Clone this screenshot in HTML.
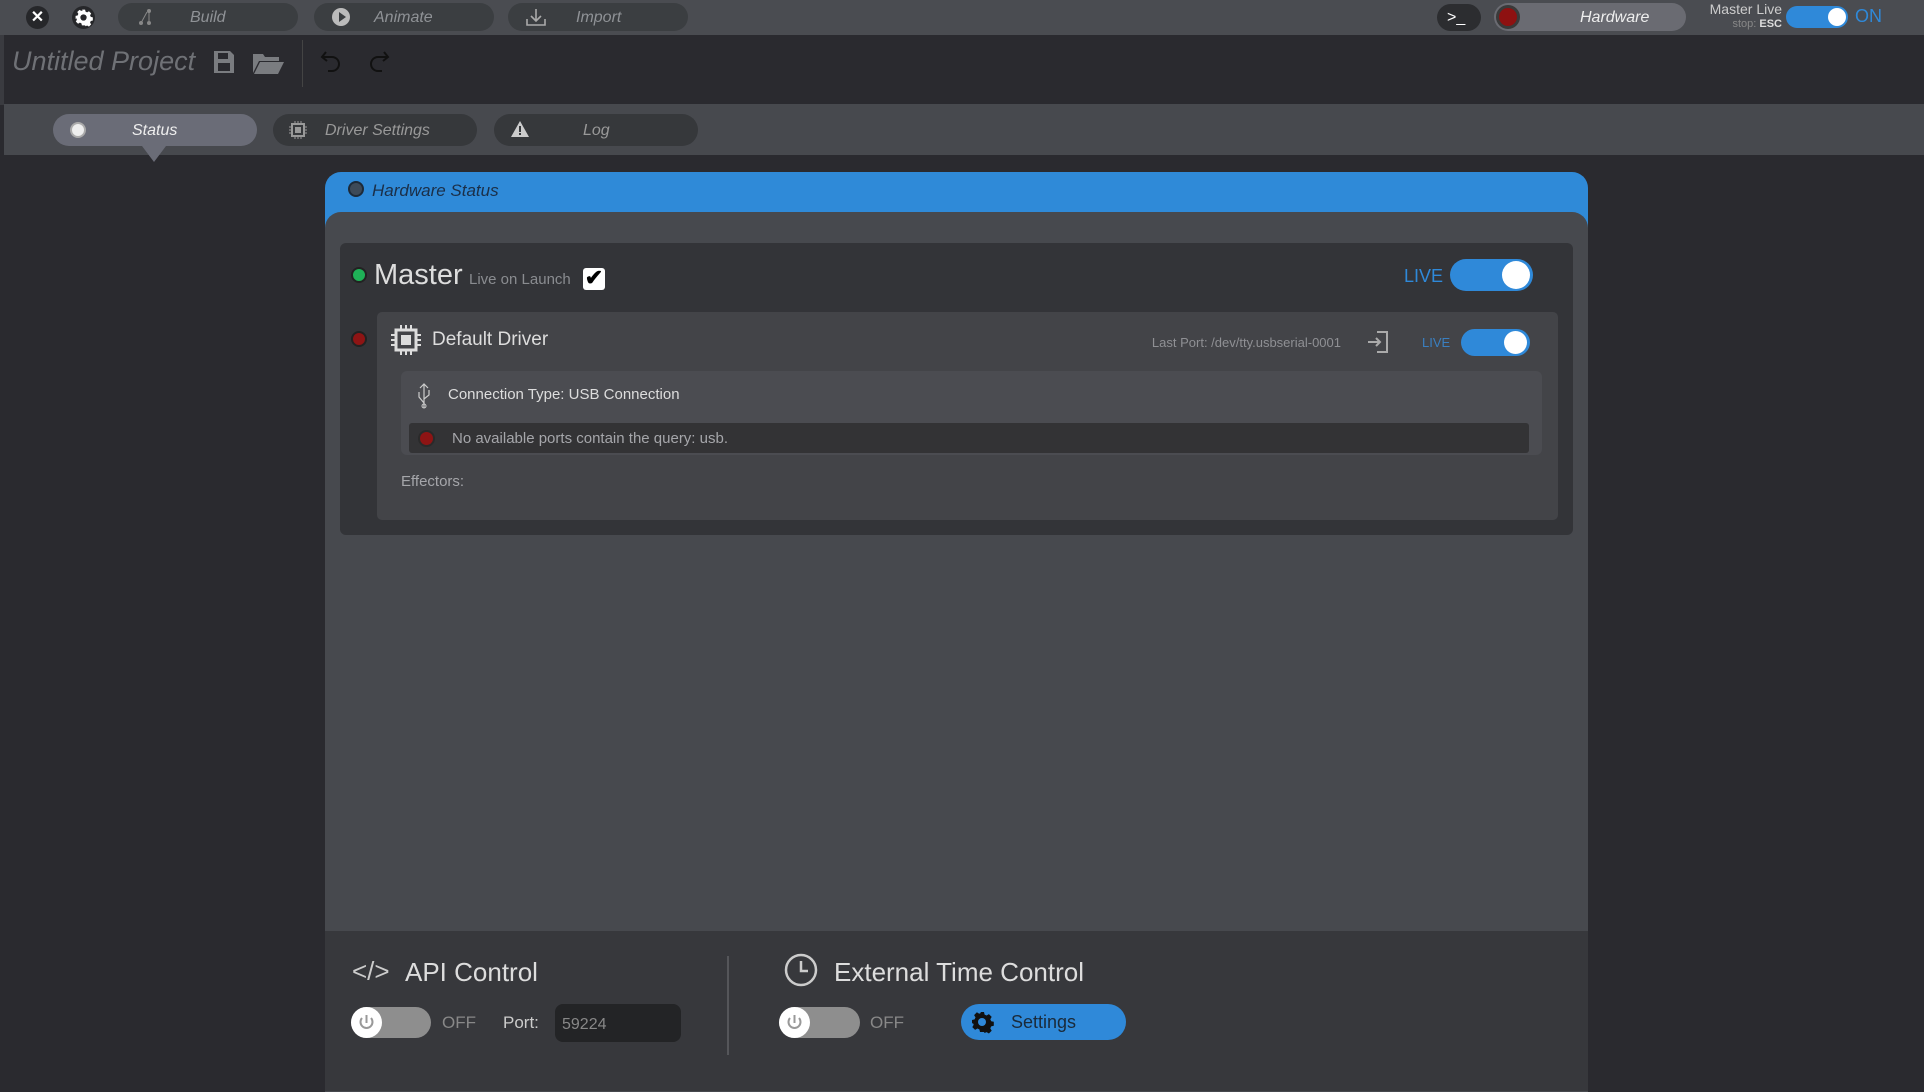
<!DOCTYPE html>
<html><head><meta charset="utf-8"><style>
*{box-sizing:border-box;margin:0;padding:0}
body{width:1924px;height:1076px;background:#2a2a2f;font-family:"Liberation Sans",sans-serif;position:relative;overflow:hidden;color:#ddd}
.a{position:absolute;white-space:nowrap}
.pill{position:absolute;border-radius:16px;background:#3b3e41;color:#8f9296;font-style:italic;font-size:16px}
.tg{position:absolute;border-radius:20px;background:#2f89d9}
.tg i{position:absolute;background:#fff;border-radius:50%}
</style></head><body>
<!-- top bar -->
<div class="a" style="left:0;top:0;width:1924px;height:35px;background:#4a4c51"></div>
<div class="a" style="left:0;top:35px;width:4px;height:70px;background:#3a3b40"></div>
<div class="a" style="left:26px;top:6px;width:23px;height:23px;border-radius:50%;background:#26272a;color:#fff;font-size:16px;font-weight:bold;text-align:center;line-height:23px">✕</div>
<div class="a" style="left:72px;top:6px;width:23px;height:23px;border-radius:50%;background:#26272a"></div>
<svg class="a" style="left:74px;top:8px" width="19" height="19" viewBox="0 0 24 24"><path fill="#fff" d="M10 2h4l.6 2.6 2 .9 2.3-1.4 2.8 2.8-1.4 2.3.9 2 2.6.6v4l-2.6.6-.9 2 1.4 2.3-2.8 2.8-2.3-1.4-2 .9L14 22h-4l-.6-2.6-2-.9-2.3 1.4-2.8-2.8 1.4-2.3-.9-2L2 14v-4l2.6-.6.9-2-1.4-2.3 2.8-2.8 2.3 1.4 2-.9z"/><circle cx="12" cy="12" r="4" fill="#26272a"/></svg>
<div class="pill" style="left:118px;top:3px;width:180px;height:28px"><span class="a" style="left:72px;top:6px">Build</span>
<svg class="a" style="left:20px;top:5px" width="16" height="18"><circle cx="3" cy="15" r="2" fill="#888"/><circle cx="11" cy="15" r="2" fill="#888"/><circle cx="11" cy="3" r="2" fill="#888"/><path d="M3 15 L9 4 M11 3 V13" stroke="#888" fill="none"/></svg></div>
<div class="pill" style="left:314px;top:3px;width:180px;height:28px"><span class="a" style="left:60px;top:6px">Animate</span>
<div class="a" style="left:18px;top:5px;width:18px;height:18px;border-radius:50%;background:#bbb"></div><div class="a" style="left:25px;top:9px;border-left:7px solid #3b3e41;border-top:5px solid transparent;border-bottom:5px solid transparent"></div></div>
<div class="pill" style="left:508px;top:3px;width:180px;height:28px"><span class="a" style="left:68px;top:6px">Import</span>
<svg class="a" style="left:17px;top:4px" width="22" height="20"><path d="M2 12v6h18v-6M11 2v12M6 9l5 5 5-5" stroke="#aaa" stroke-width="1.6" fill="none"/></svg></div>
<div class="a" style="left:1437px;top:4px;width:44px;height:27px;border-radius:14px;background:#2c2d30;color:#fff;font-size:16px;line-height:27px;padding-left:10px">&gt;_</div>
<div class="a" style="left:1494px;top:3px;width:192px;height:28px;border-radius:14px;background:#6a6b72;color:#eee;font-style:italic;font-size:16px;line-height:30px;padding-left:86px">Hardware</div>
<div class="a" style="left:1496px;top:5px;width:24px;height:24px;border-radius:50%;background:#333;border:3px solid #3a3a3a"><div style="width:18px;height:18px;border-radius:50%;background:#8e1111"></div></div>
<div class="a" style="left:1700px;top:1px;color:#ccc;font-size:14px;width:82px;text-align:right">Master Live</div>
<div class="a" style="left:1700px;top:18px;color:#888;font-size:11px;width:82px;text-align:right">stop: <b style="color:#ddd">ESC</b></div>
<div class="tg" style="left:1786px;top:6px;width:62px;height:22px"><i style="left:42px;top:2px;width:18px;height:18px"></i></div>
<div class="a" style="left:1855px;top:6px;color:#2f89d9;font-size:18px">ON</div>
<!-- title bar -->
<div class="a" style="left:12px;top:46px;font-size:27px;font-style:italic;color:#6f7176;font-weight:300">Untitled Project</div>
<svg class="a" style="left:213px;top:50px" width="22" height="24"><path d="M1 1h16l4 4v18H1z" fill="#7a7c80"/><rect x="5" y="3" width="10" height="6" fill="#2a2a2f"/><rect x="5" y="13" width="12" height="8" fill="#2a2a2f"/></svg>
<svg class="a" style="left:252px;top:52px" width="32" height="22"><path d="M1 2h10l2 3h14v4H7L1 21z" fill="#7a7c80"/><path d="M8 10h24l-6 12H2z" fill="#7a7c80"/></svg>
<div class="a" style="left:302px;top:40px;width:1px;height:47px;background:#444"></div>
<svg class="a" style="left:320px;top:48px" width="90" height="30"><path d="M6 4L2 9l5 4M2 9h10a7 7 0 0 1 0 14H8" stroke="#111" stroke-width="2" fill="none"/><path d="M64 4l4 5-5 4M68 9H58a7 7 0 0 0 0 14h4" stroke="#111" stroke-width="2" fill="none"/></svg>
<!-- tab bar -->
<div class="a" style="left:4px;top:104px;width:1920px;height:51px;background:#47494e"></div>
<div class="a" style="left:53px;top:114px;width:204px;height:32px;border-radius:16px;background:#6a6c77;color:#eee;font-style:italic;font-size:16px;line-height:34px;padding-left:79px">Status</div>
<div class="a" style="left:70px;top:122px;width:16px;height:16px;border-radius:50%;background:#eee;border:2px solid #aaa"></div>
<div class="a" style="left:142px;top:146px;border-top:16px solid #6a6c77;border-left:12px solid transparent;border-right:12px solid transparent"></div>
<div class="a" style="left:273px;top:114px;width:204px;height:32px;border-radius:16px;background:#36383b;color:#999;font-style:italic;font-size:16px;line-height:34px;padding-left:52px">Driver Settings</div>
<svg class="a" style="left:289px;top:121px" width="18" height="18"><rect x="3" y="3" width="12" height="12" fill="none" stroke="#999" stroke-width="2"/><rect x="6" y="6" width="6" height="6" fill="#999"/><path d="M6 0v3M9 0v3M12 0v3M6 15v3M9 15v3M12 15v3M0 6h3M0 9h3M0 12h3M15 6h3M15 9h3M15 12h3" stroke="#999"/></svg>
<div class="a" style="left:494px;top:114px;width:204px;height:32px;border-radius:16px;background:#36383b;color:#999;font-style:italic;font-size:16px;line-height:34px;padding-left:89px">Log</div>
<svg class="a" style="left:510px;top:120px" width="20" height="18"><path d="M10 1L19 17H1z" fill="#ccc"/><rect x="9" y="6" width="2" height="6" fill="#36383b"/><rect x="9" y="13" width="2" height="2" fill="#36383b"/></svg>
<!-- panel -->
<div class="a" style="left:325px;top:172px;width:1263px;height:920px;border-radius:16px;background:#2f8ad8"></div>
<div class="a" style="left:348px;top:181px;width:16px;height:16px;border-radius:50%;background:#3d4a58;border:2px solid #1d2a38"></div>
<div class="a" style="left:372px;top:181px;font-size:17px;font-style:italic;color:#1b2f48">Hardware Status</div>
<div class="a" style="left:325px;top:212px;width:1263px;height:880px;border-radius:16px 16px 0 0;background:#47494e"></div>
<div class="a" style="left:340px;top:243px;width:1233px;height:292px;border-radius:6px;background:#333438"></div>
<div class="a" style="left:351px;top:267px;width:16px;height:16px;border-radius:50%;background:#1fb157;border:2px solid #222"></div>
<div class="a" style="left:374px;top:259px;font-size:29px;color:#ddd">Master</div>
<div class="a" style="left:469px;top:271px;font-size:15px;color:#8a8c90">Live on Launch</div>
<div class="a" style="left:583px;top:268px;width:22px;height:22px;background:#fff;border-radius:3px;color:#000;font-size:22px;line-height:20px;text-align:center;font-weight:bold">✔</div>
<div class="a" style="left:1404px;top:266px;font-size:18px;color:#2f89d9">LIVE</div>
<div class="tg" style="left:1450px;top:259px;width:83px;height:32px"><i style="left:52px;top:2px;width:28px;height:28px"></i></div>
<div class="a" style="left:351px;top:331px;width:16px;height:16px;border-radius:50%;background:#8e1414;border:2px solid #222"></div>
<div class="a" style="left:377px;top:312px;width:1181px;height:208px;border-radius:5px;background:#434448"></div>
<svg class="a" style="left:391px;top:325px" width="30" height="30"><rect x="5" y="5" width="20" height="20" fill="none" stroke="#ddd" stroke-width="3"/><rect x="10" y="10" width="10" height="10" fill="#ddd"/><path d="M10 0v5M15 0v5M20 0v5M10 25v5M15 25v5M20 25v5M0 10h5M0 15h5M0 20h5M25 10h5M25 15h5M25 20h5" stroke="#ddd" stroke-width="2"/></svg>
<div class="a" style="left:432px;top:329px;font-size:19px;color:#ddd">Default Driver</div>
<div class="a" style="left:1100px;top:335px;width:241px;text-align:right;font-size:13px;color:#8f9094">Last Port: /dev/tty.usbserial-0001</div>
<svg class="a" style="left:1367px;top:331px" width="22" height="22"><path d="M10 1h10v20H10" stroke="#aaa" stroke-width="2" fill="none"/><path d="M1 11h12M9 7l4 4-4 4" stroke="#aaa" stroke-width="2" fill="none"/></svg>
<div class="a" style="left:1422px;top:335px;font-size:13px;color:#3a7fc0">LIVE</div>
<div class="tg" style="left:1461px;top:329px;width:69px;height:27px"><i style="left:43px;top:2px;width:23px;height:23px"></i></div>
<div class="a" style="left:401px;top:371px;width:1141px;height:84px;border-radius:6px;background:#4b4c51"></div>
<svg class="a" style="left:416px;top:383px" width="16" height="26"><path d="M8 1v24M4 5l4-4 4 4M8 20L3 14V9M8 16l5-4V7" stroke="#ccc" stroke-width="1.2" fill="none"/><circle cx="8" cy="23" r="2" fill="none" stroke="#ccc"/></svg>
<div class="a" style="left:448px;top:386px;font-size:15px;color:#ddd">Connection Type: USB Connection</div>
<div class="a" style="left:409px;top:423px;width:1120px;height:30px;border-radius:3px;background:#333335"></div>
<div class="a" style="left:418px;top:430px;width:17px;height:17px;border-radius:50%;background:#8e1414;border:2px solid #2a2a2a"></div>
<div class="a" style="left:452px;top:430px;font-size:15px;color:#a5a6aa">No available ports contain the query: usb.</div>
<div class="a" style="left:401px;top:473px;font-size:15px;color:#a5a6aa">Effectors:</div>
<!-- bottom -->
<div class="a" style="left:325px;top:931px;width:1263px;height:160px;background:#37383c"></div>
<div class="a" style="left:352px;top:956px;font-size:26px;color:#ccc">&lt;/&gt;</div>
<div class="a" style="left:405px;top:957px;font-size:26px;color:#ddd">API Control</div>
<div class="a" style="left:727px;top:956px;width:2px;height:99px;background:#55565a"></div>
<svg class="a" style="left:784px;top:953px" width="34" height="34"><circle cx="17" cy="17" r="15" fill="none" stroke="#ccc" stroke-width="2.5"/><path d="M17 8v10h7" stroke="#ccc" stroke-width="2.5" fill="none"/></svg>
<div class="a" style="left:834px;top:957px;font-size:26px;color:#ddd">External Time Control</div>
<div class="a" style="left:351px;top:1007px;width:80px;height:31px;border-radius:16px;background:#8e8e8e"></div>
<div class="a" style="left:351px;top:1007px;width:31px;height:31px;border-radius:50%;background:#fff"></div>
<svg class="a" style="left:356px;top:1012px" width="21" height="21"><path d="M6 6a6 6 0 1 0 9 0M10.5 3v8" stroke="#999" stroke-width="2" fill="none"/></svg>
<div class="a" style="left:442px;top:1013px;font-size:17px;color:#888">OFF</div>
<div class="a" style="left:503px;top:1013px;font-size:17px;color:#ccc">Port:</div>
<div class="a" style="left:555px;top:1004px;width:126px;height:38px;border-radius:8px;background:#232426;font-size:16px;color:#888;padding:12px 7px">59224</div>
<div class="a" style="left:779px;top:1007px;width:81px;height:31px;border-radius:16px;background:#8e8e8e"></div>
<div class="a" style="left:779px;top:1007px;width:31px;height:31px;border-radius:50%;background:#fff"></div>
<svg class="a" style="left:784px;top:1012px" width="21" height="21"><path d="M6 6a6 6 0 1 0 9 0M10.5 3v8" stroke="#999" stroke-width="2" fill="none"/></svg>
<div class="a" style="left:870px;top:1013px;font-size:17px;color:#888">OFF</div>
<div class="a" style="left:961px;top:1004px;width:165px;height:36px;border-radius:18px;background:#2f89d9;font-size:18px;color:#1a2a3a;padding:8px 0 0 50px">Settings</div>
<svg class="a" style="left:970px;top:1010px" width="24" height="24" viewBox="0 0 24 24"><path fill="#111" d="M10 2h4l.6 2.6 2 .9 2.3-1.4 2.8 2.8-1.4 2.3.9 2 2.6.6v4l-2.6.6-.9 2 1.4 2.3-2.8 2.8-2.3-1.4-2 .9L14 22h-4l-.6-2.6-2-.9-2.3 1.4-2.8-2.8 1.4-2.3-.9-2L2 14v-4l2.6-.6.9-2-1.4-2.3 2.8-2.8 2.3 1.4 2-.9z"/><circle cx="12" cy="12" r="4" fill="#2f89d9"/></svg>
</body></html>
